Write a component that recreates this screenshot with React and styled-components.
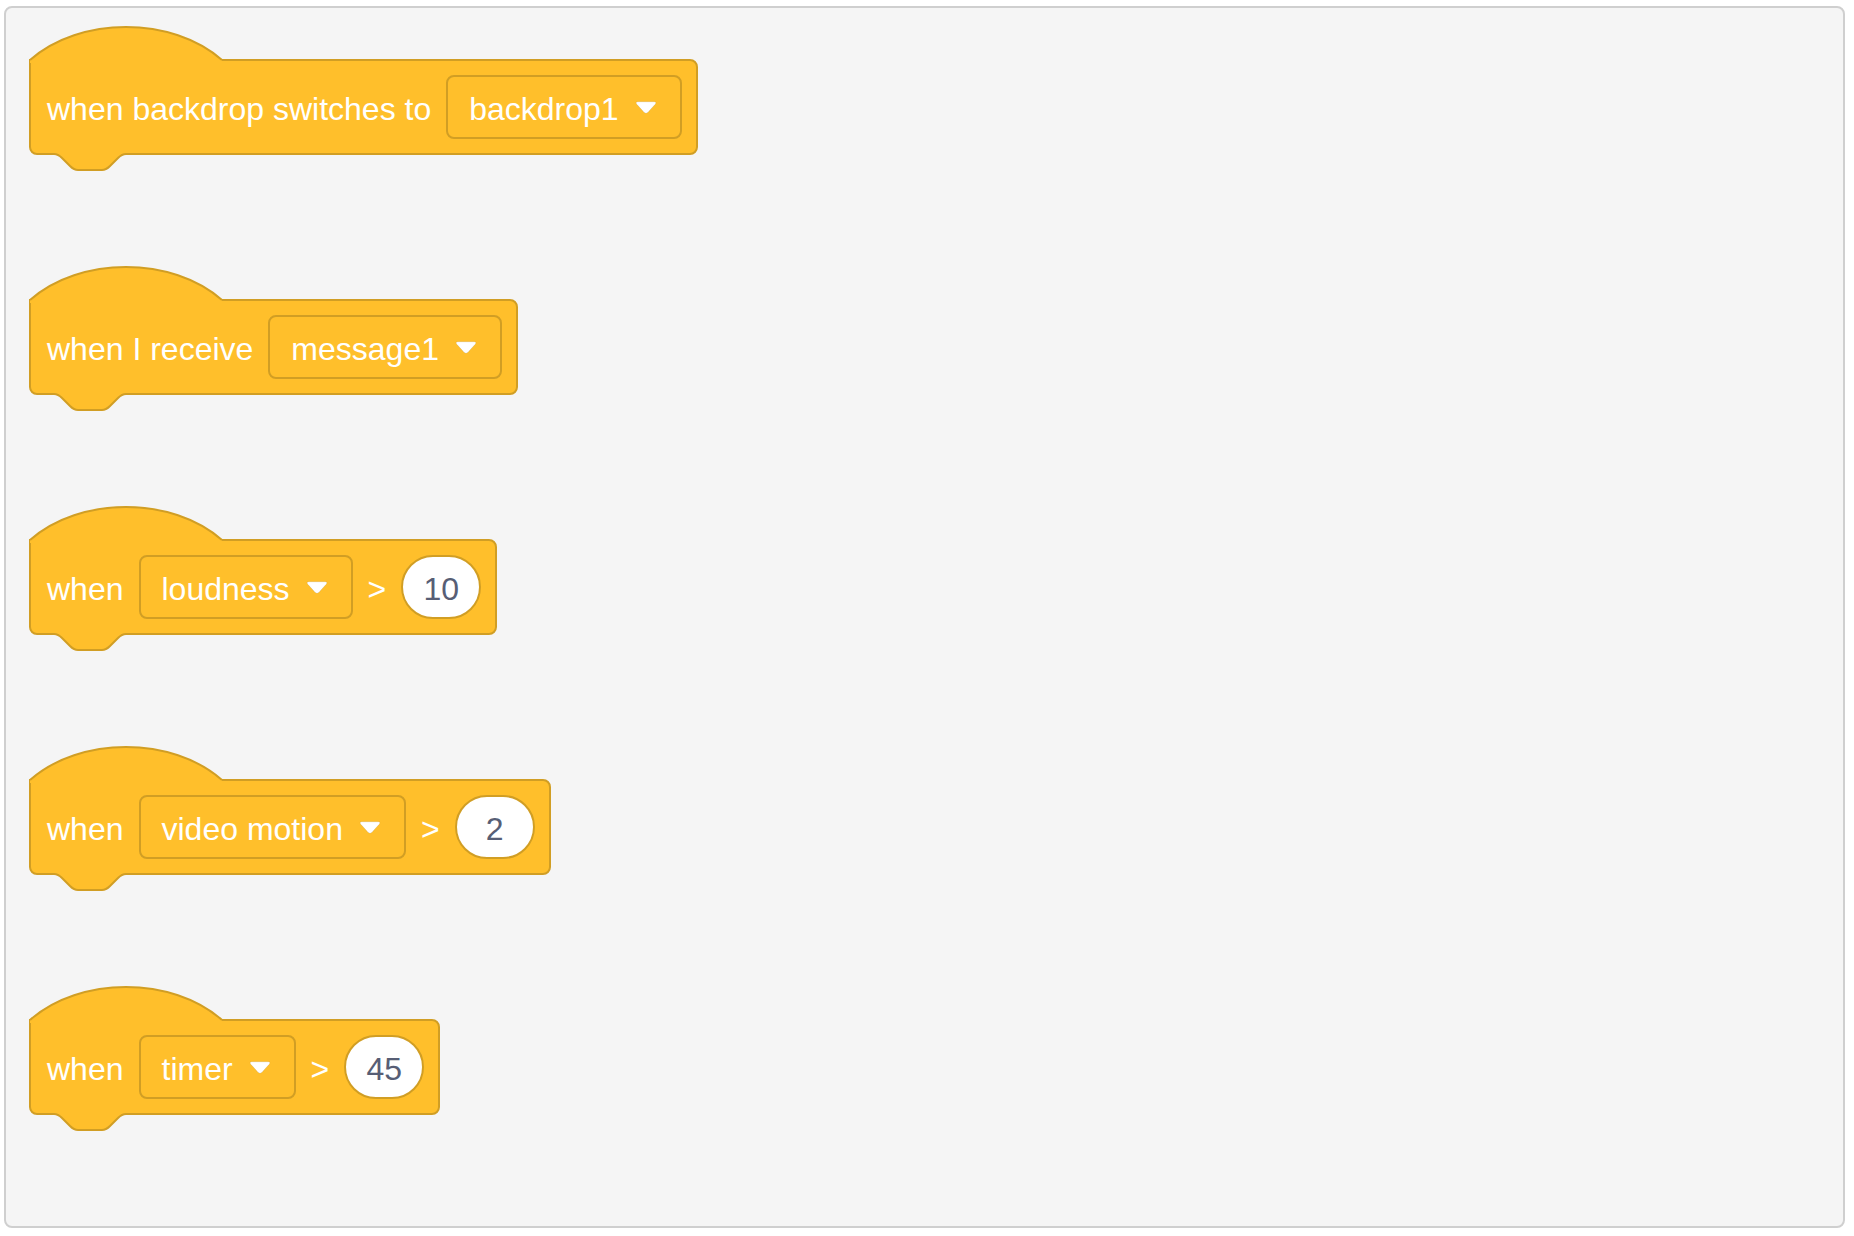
import React from 'react'
import styled, { createGlobalStyle } from 'styled-components'

const FILL = '#ffbf2b';
const STROKE = '#d19e24';

const GlobalStyle = createGlobalStyle`
  html, body {
    margin: 0;
    padding: 0;
    background: #fff;
  }
  body {
    font-family: "Liberation Sans", Arial, Helvetica, sans-serif;
  }
`;

const Workspace = styled.div`
  box-sizing: border-box;
  margin: 6px 0 0 4px;
  width: 1841px;
  height: 1222px;
  background: #f5f5f5;
  border: 2px solid #cfcfcf;
  border-radius: 8px;
  padding: 51px 0 0 23px;
  display: flex;
  flex-direction: column;
  align-items: flex-start;
  gap: 144px;
`;

const Block = styled.div`
  position: relative;
  box-sizing: border-box;
  height: 96px;
  display: flex;
  align-items: center;
  gap: 15px;
  padding: 0 14px 0 16px;
  background: ${FILL};
  border: 2px solid ${STROKE};
  border-radius: 0 8px 8px 8px;
  color: #fff;
  font-size: 32px;
`;

const Hat = styled.svg`
  position: absolute;
  left: -2px;
  top: -36px;
  overflow: visible;
`;

const Notch = styled.svg`
  position: absolute;
  left: 21px;
  top: calc(100% - 2px);
  overflow: visible;
`;

const Label = styled.span`
  white-space: pre;
  padding-top: 5px;
`;

const Dropdown = styled.div`
  box-sizing: border-box;
  height: 64px;
  display: flex;
  align-items: center;
  gap: 16px;
  padding: 0 23px 0 21px;
  border: 2px solid ${STROKE};
  border-radius: 8px;
  background: ${FILL};
`;

const NumberField = styled.div`
  box-sizing: border-box;
  height: 64px;
  min-width: 80px;
  padding: 5px 20px 0;
  display: flex;
  align-items: center;
  justify-content: center;
  background: #fff;
  border: 2px solid ${STROKE};
  border-radius: 32px;
  color: #575e75;
`;

const HatShape = () => (
  <Hat width="196" height="40" viewBox="0 0 196 40">
    <path d="M1,35 C51,-9 143,-9 193,35 L193,38 L1,38 Z" fill={FILL} />
    <path d="M1,35 C51,-9 143,-9 193,35" fill="none" stroke={STROKE} strokeWidth="2" />
  </Hat>
);

const NotchShape = () => {
  const curve = 'M74,3 c-4,0 -6,2 -8,4 l-8,8 c-2,2 -4,4 -8,4 h-24 c-4,0 -6,-2 -8,-4 l-8,-8 c-2,-2 -4,-4 -8,-4';
  return (
    <Notch width="76" height="22" viewBox="0 0 76 22">
      <path d={curve + ' L2,0 L74,0 Z'} fill={FILL} />
      <path d={curve} fill="none" stroke={STROKE} strokeWidth="2" />
    </Notch>
  );
};

const Arrow = () => (
  <svg width="22" height="13" viewBox="0 0 22 13">
    <path
      d="M3,0.8 H19 Q22,0.8 20.2,3.2 L13,11.3 Q11,13.3 9,11.3 L1.8,3.2 Q0,0.8 3,0.8 Z"
      fill="#fff"
      stroke="rgba(0,0,0,0.08)"
      strokeWidth="1"
      strokeLinejoin="round"
    />
  </svg>
);

const Menu = ({ value }) => (
  <Dropdown>
    <Label>{value}</Label>
    <Arrow />
  </Dropdown>
);

const HatBlock = ({ children }) => (
  <Block>
    <HatShape />
    {children}
    <NotchShape />
  </Block>
);

const App = () => {
  return (
    <>
      <GlobalStyle />
      <Workspace>
        <HatBlock>
          <Label>when backdrop switches to</Label>
          <Menu value="backdrop1" />
        </HatBlock>
        <HatBlock>
          <Label>when I receive</Label>
          <Menu value="message1" />
        </HatBlock>
        <HatBlock>
          <Label>when</Label>
          <Menu value="loudness" />
          <Label>&gt;</Label>
          <NumberField>10</NumberField>
        </HatBlock>
        <HatBlock>
          <Label>when</Label>
          <Menu value="video motion" />
          <Label>&gt;</Label>
          <NumberField>2</NumberField>
        </HatBlock>
        <HatBlock>
          <Label>when</Label>
          <Menu value="timer" />
          <Label>&gt;</Label>
          <NumberField>45</NumberField>
        </HatBlock>
      </Workspace>
    </>
  )
}

export default App
